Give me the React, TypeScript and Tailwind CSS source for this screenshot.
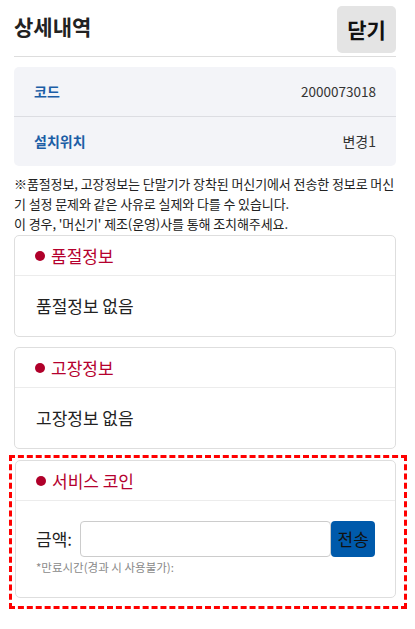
import React from "react";

function SectionCard({ title, children }: { title: string; children: React.ReactNode }) {
  return (
    <div className="rounded-[5px] border border-[#dedede] bg-white">
      <div className="flex items-center border-b border-[#ececec] py-[8px] pl-[20px] leading-[23px]">
        <span className="mr-[6px] inline-block h-[10px] w-[10px] rounded-full bg-[#b0002a]" />
        <span className="text-[17px] text-[#b5002e]">{title}</span>
      </div>
      {children}
    </div>
  );
}

export default function App() {
  const [amount, setAmount] = React.useState("");

  return (
    <div className="min-h-screen bg-white font-['Noto_Sans_CJK_KR',sans-serif] text-[#222]">
      <div className="pl-[14px] pr-[19px]">
        {/* header */}
        <div className="flex items-start justify-between border-b border-[#dddddd] pb-[3px]">
          <h1 className="pt-[12px] text-[21px] font-bold leading-[28px] text-[#222]">상세내역</h1>
          <button
            type="button"
            className="mt-[6px] h-[47px] w-[59px] rounded-[5px] bg-[#e4e4e4] text-[21px] font-bold text-[#111]"
          >
            닫기
          </button>
        </div>

        {/* info box */}
        <div className="mt-[10px] rounded-[5px] bg-[#f3f4f8] text-[14px]">
          <div className="flex h-[50px] items-center justify-between border-b border-[#dcdde2] px-5">
            <span className="font-bold text-[#1c5ea6]">코드</span>
            <span className="text-[13.5px] text-[#333]">2000073018</span>
          </div>
          <div className="flex h-[49px] items-center justify-between px-5">
            <span className="font-bold text-[#1c5ea6]">설치위치</span>
            <span className="text-[#333]">변경1</span>
          </div>
        </div>

        {/* notice */}
        <p className="mt-[8px] text-[13px] leading-[20px] tracking-[-0.1px] text-[#222]">
          ※품절정보, 고장정보는 단말기가 장착된 머신기에서 전송한 정보로 머신기 설정 문제와 같은 사유로 실제와 다를 수 있습니다.
          <br />
          이 경우, '머신기' 제조(운영)사를 통해 조치해주세요.
        </p>

        <div className="mt-px flex flex-col gap-[10px]">
          <SectionCard title="품절정보">
            <div className="py-[18px] pl-[21px] text-[17px] leading-[24px]">품절정보 없음</div>
          </SectionCard>

          <SectionCard title="고장정보">
            <div className="py-[18px] pl-[21px] text-[17px] leading-[24px]">고장정보 없음</div>
          </SectionCard>
        </div>

        {/* service coin, highlighted */}
        <div className="-mr-[11px] -ml-[5px] mt-[6px] border-[3px] border-dashed border-[#ff0000] pt-[2px] pr-[8px] pb-[8px] pl-[3px]">
          <SectionCard title="서비스 코인">
            <div className="px-[20px] pt-[20px] pb-[20px]">
              <div className="flex items-center">
                <span className="w-[44px] text-[17px]">금액:</span>
                <input
                  type="text"
                  value={amount}
                  onChange={(e) => setAmount(e.target.value)}
                  className="h-[36px] w-[253px] rounded-[4px] border border-[#cccccc] bg-white px-2 text-[15px] outline-none"
                />
                <button
                  type="button"
                  className="h-[36px] w-[44px] rounded-[4px] bg-[#005aab] text-[17px] text-[#111]"
                >
                  전송
                </button>
              </div>
              <p className="text-[11.5px] leading-[20px] text-[#8a8a8a]">*만료시간(경과 시 사용불가):</p>
            </div>
          </SectionCard>
        </div>
      </div>
    </div>
  );
}
